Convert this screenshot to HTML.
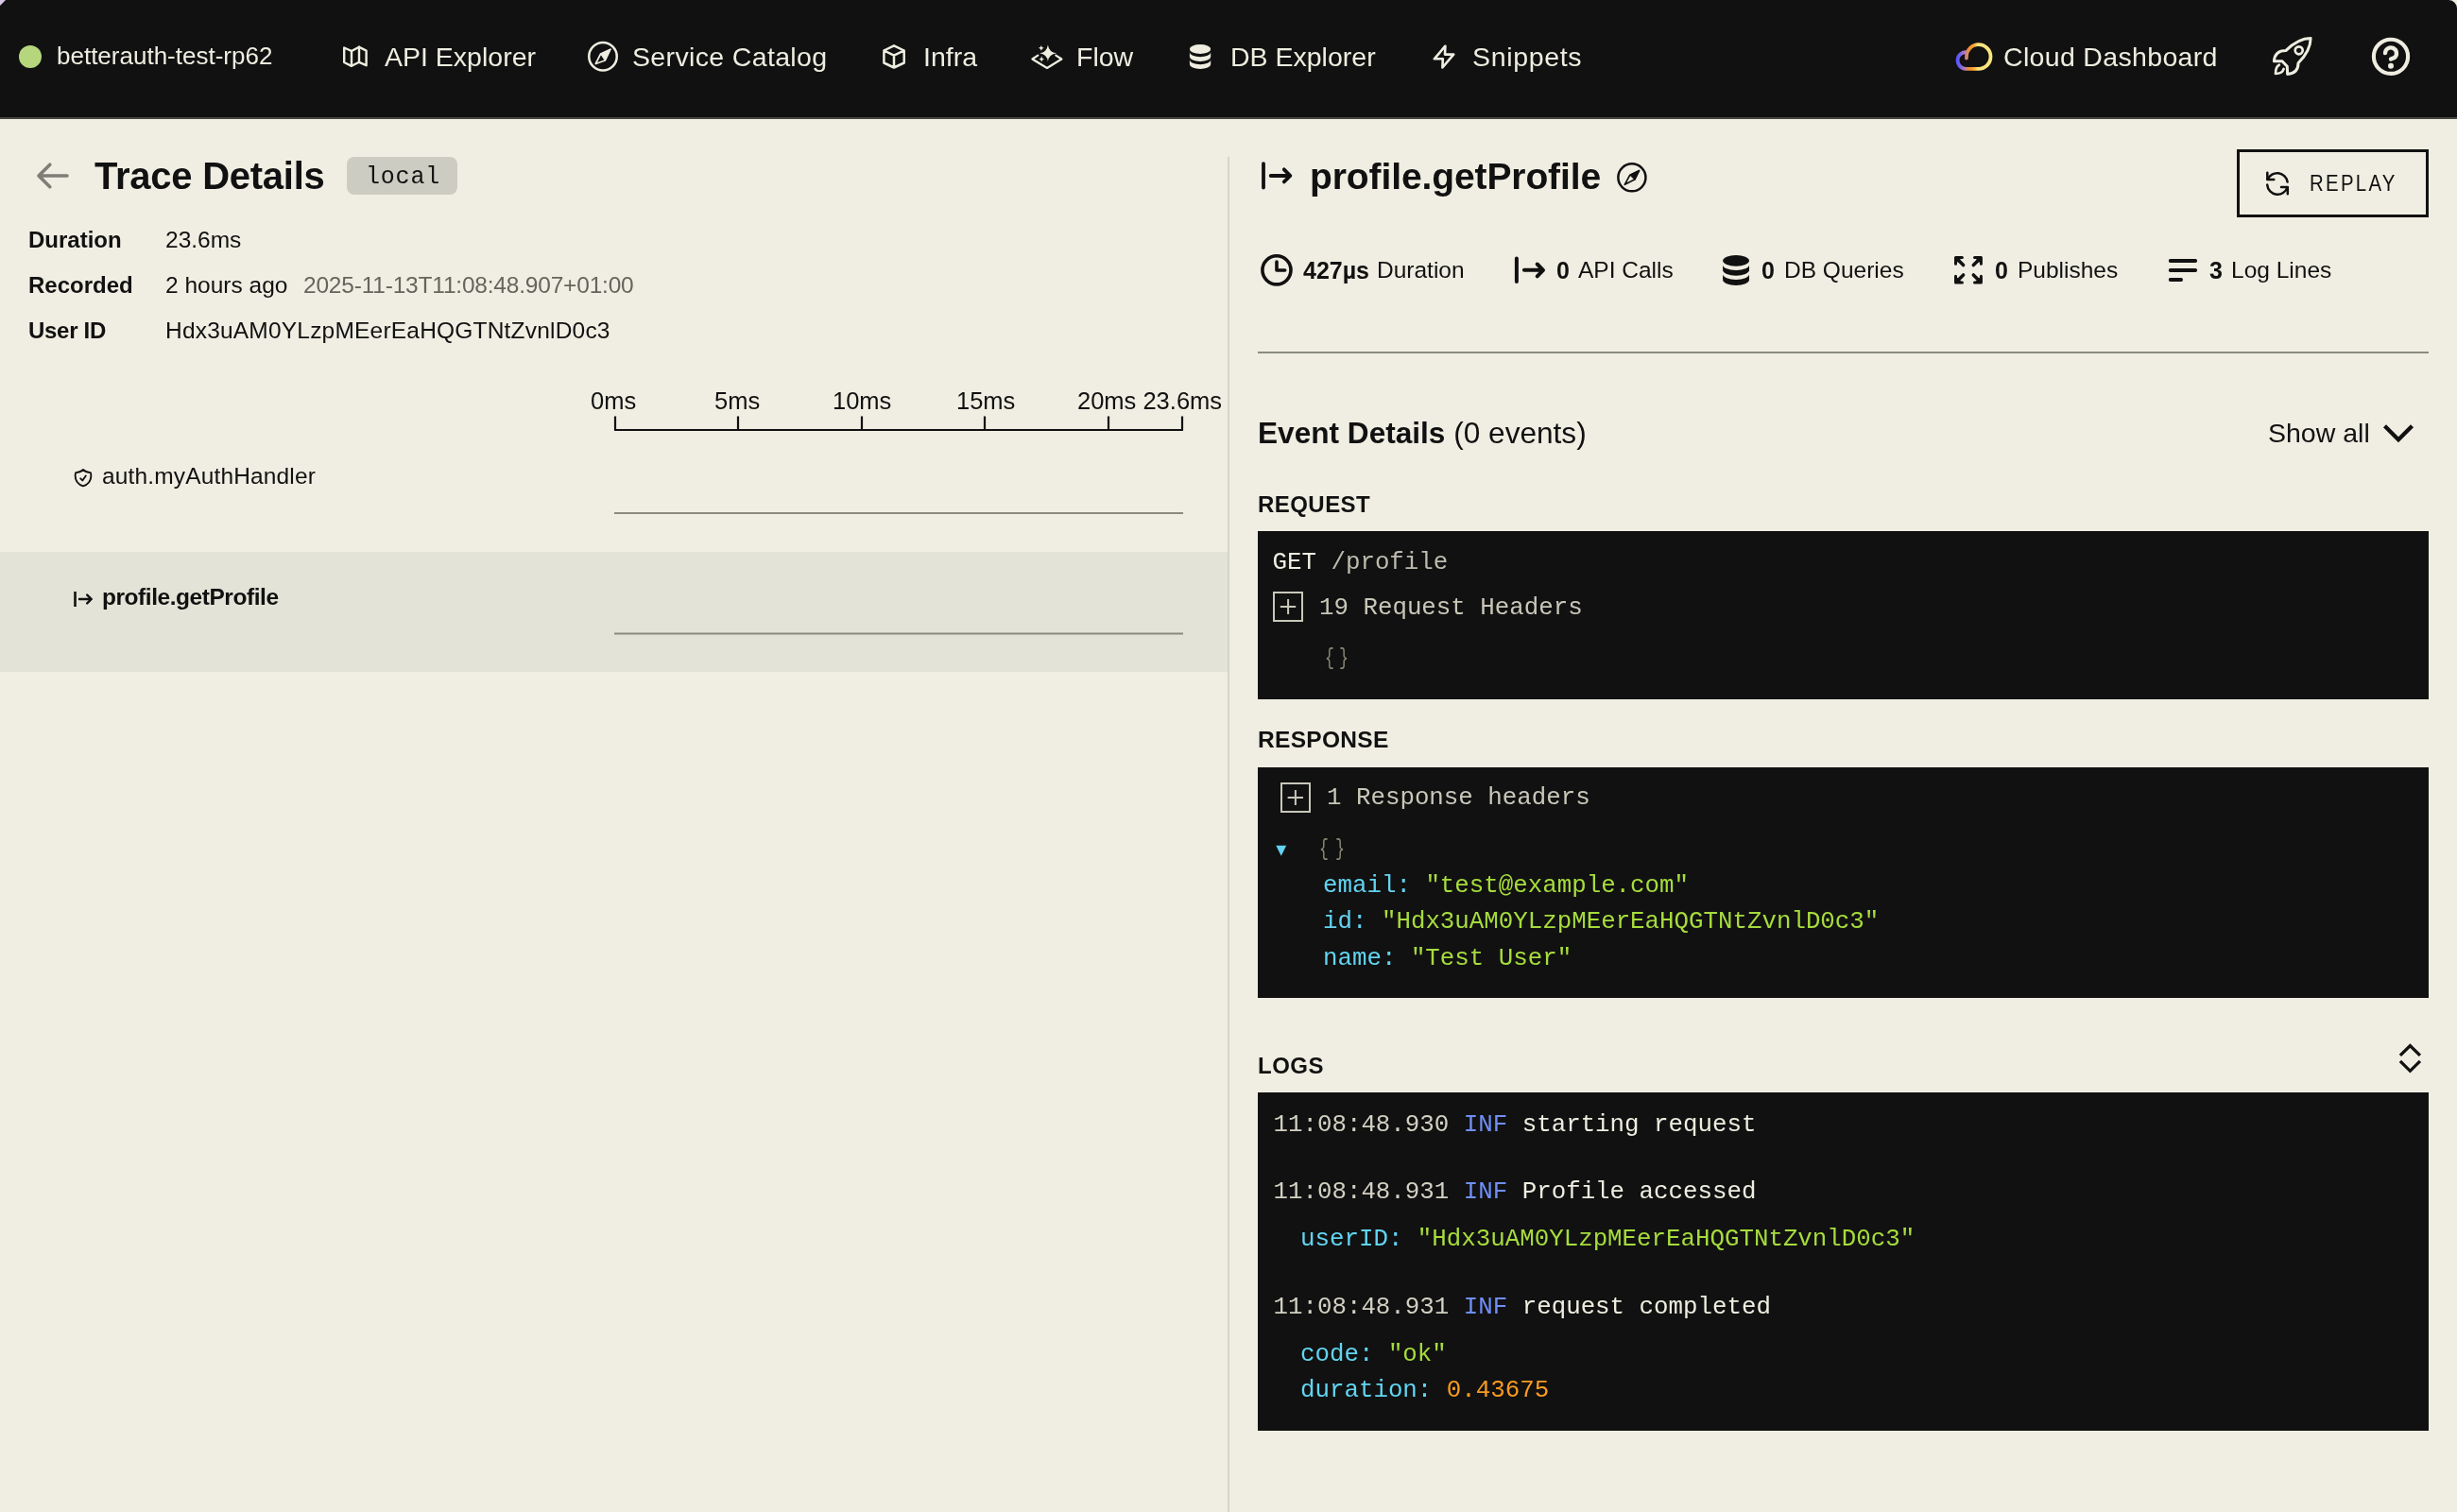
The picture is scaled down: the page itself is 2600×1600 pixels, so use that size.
<!DOCTYPE html>
<html><head><meta charset="utf-8">
<style>
*{box-sizing:border-box;margin:0;padding:0}
html,body{width:2600px;height:1600px;overflow:hidden;background:#F0EEE2}
body{position:relative;font-family:"Liberation Sans",sans-serif;color:#111111}
.a{position:absolute;white-space:pre;line-height:1}
.m{font-family:"Liberation Mono",monospace;font-size:25.8px}
.nt{color:#EEEDE0;font-size:28.5px}
.b{font-weight:700}
.c-ts{color:#D2D0C2}
.c-inf{color:#6F8FF7}
.c-msg{color:#EEEDE0}
.c-key{color:#62D4F1}
.c-str{color:#A6DC3C}
.c-num{color:#F89B22}
.c-br{color:#8C8876}
.c-hd{color:#C9C7B9}
</style></head><body>
<div style="position:absolute;left:0;top:0;width:2600px;height:1600px;will-change:transform;background:#F0EEE2;overflow:hidden">
<!-- nav bar -->
<div class="a" style="left:0;top:0;width:2600px;height:124px;background:#111111"></div>
<div class="a" style="left:0;top:124px;width:2600px;height:2px;background:#46463f"></div>

<div class="a" style="left:20px;top:48px;width:24px;height:24px;border-radius:50%;background:#B5D67C"></div>
<div class="a nt" style="left:60px;top:46px;font-size:26px">betterauth-test-rp62</div>
<div class="a nt" style="left:407px;top:46px">API Explorer</div>
<div class="a nt" style="left:669px;top:46px;letter-spacing:0.35px">Service Catalog</div>
<div class="a nt" style="left:977px;top:46px">Infra</div>
<div class="a nt" style="left:1139px;top:46px">Flow</div>
<div class="a nt" style="left:1302px;top:46px">DB Explorer</div>
<div class="a nt" style="left:1558px;top:46px;letter-spacing:0.65px">Snippets</div>
<div class="a nt" style="left:2120px;top:46px;letter-spacing:0.33px">Cloud Dashboard</div>

<!-- panels -->
<div class="a" style="left:1299px;top:166px;width:2px;height:1434px;background:#D5D5C9"></div>
<div class="a" style="left:0;top:584px;width:1299px;height:127px;background:#E3E3D7"></div>

<!-- left header -->
<div class="a b" style="left:100px;top:166px;font-size:40px;letter-spacing:-0.25px">Trace Details</div>
<div class="a" style="left:367px;top:166px;width:117px;height:40px;border-radius:8px;background:#CDCCC2"></div>
<div class="a m" style="left:387px;top:175px;font-size:25px;letter-spacing:0.8px">local</div>

<div class="a b" style="left:30px;top:242px;font-size:24px">Duration</div>
<div class="a" style="left:175px;top:242px;font-size:24.5px">23.6ms</div>
<div class="a b" style="left:30px;top:290px;font-size:24px">Recorded</div>
<div class="a" style="left:175px;top:290px;font-size:24.5px">2 hours ago</div>
<div class="a" style="left:321px;top:290px;font-size:24.5px;letter-spacing:-0.2px;color:#66655d">2025-11-13T11:08:48.907+01:00</div>
<div class="a b" style="left:30px;top:338px;font-size:24px;letter-spacing:-0.3px">User ID</div>
<div class="a" style="left:175px;top:338px;font-size:24.5px;letter-spacing:0.2px">Hdx3uAM0YLzpMEerEaHQGTNtZvnlD0c3</div>

<!-- timeline labels -->
<div class="a" style="left:625px;top:412px;font-size:25.5px">0ms</div>
<div class="a" style="left:756px;top:412px;font-size:25.5px">5ms</div>
<div class="a" style="left:881px;top:412px;font-size:25.5px">10ms</div>
<div class="a" style="left:1012px;top:412px;font-size:25.5px">15ms</div>
<div class="a" style="left:1140px;top:412px;font-size:25.5px">20ms 23.6ms</div>

<div class="a" style="left:108px;top:492px;font-size:24.5px;letter-spacing:0.15px">auth.myAuthHandler</div>
<div class="a b" style="left:108px;top:620px;font-size:24.5px;letter-spacing:-0.45px">profile.getProfile</div>

<!-- right header -->
<div class="a b" style="left:1386px;top:167px;font-size:39px;letter-spacing:-0.1px">profile.getProfile</div>
<div class="a" style="left:2367px;top:158px;width:203px;height:72px;border:3px solid #111"></div>
<div class="a" style="left:2444px;top:182px;font-size:24px;letter-spacing:2.7px;transform:scaleX(0.85);transform-origin:0 0">REPLAY</div>

<div class="a b" style="left:1379px;top:273.5px;font-size:25px">427µs</div>
<div class="a" style="left:1457px;top:273.5px;font-size:24.5px">Duration</div>
<div class="a b" style="left:1647px;top:273.5px;font-size:25px">0</div>
<div class="a" style="left:1670px;top:273.5px;font-size:24.5px">API Calls</div>
<div class="a b" style="left:1864px;top:273.5px;font-size:25px">0</div>
<div class="a" style="left:1888px;top:273.5px;font-size:24.5px">DB Queries</div>
<div class="a b" style="left:2111px;top:273.5px;font-size:25px">0</div>
<div class="a" style="left:2135px;top:273.5px;font-size:24.5px">Publishes</div>
<div class="a b" style="left:2338px;top:273.5px;font-size:25px">3</div>
<div class="a" style="left:2361px;top:273.5px;font-size:24.5px">Log Lines</div>

<div class="a" style="left:1331px;top:372px;width:1239px;height:2px;background:#8a8a80"></div>

<div class="a" style="left:1331px;top:442.5px;font-size:31.6px"><b>Event Details</b> (0 events)</div>
<div class="a" style="left:2400px;top:443.8px;font-size:28.5px">Show all</div>

<div class="a b" style="left:1331px;top:521.5px;font-size:24px;letter-spacing:0.45px">REQUEST</div>
<div class="a" style="left:1331px;top:562px;width:1239px;height:178px;background:#111"></div>
<div class="a m" style="left:1346.5px;top:583px"><span class="c-msg">GET</span> <span style="color:#BDBBAE">/profile</span></div>
<div class="a" style="left:1347px;top:626px;width:32px;height:32px;border:2px solid #C9C7B9"></div>
<div class="a m c-hd" style="left:1396px;top:630.7px">19 Request Headers</div>
<div class="a m c-br" style="left:1402px;top:685.6px;font-size:23px;transform:scaleX(0.72);transform-origin:0 0">{</div><div class="a m c-br" style="left:1417px;top:685.6px;font-size:23px;transform:scaleX(0.72);transform-origin:0 0">}</div>

<div class="a b" style="left:1331px;top:770.7px;font-size:24.5px;letter-spacing:0.3px">RESPONSE</div>
<div class="a" style="left:1331px;top:812px;width:1239px;height:244px;background:#111"></div>
<div class="a" style="left:1355px;top:828px;width:32px;height:32px;border:2px solid #C9C7B9"></div>
<div class="a m c-hd" style="left:1404px;top:832px">1 Response headers</div>
<div class="a m c-br" style="left:1396px;top:887.8px;font-size:23px;transform:scaleX(0.72);transform-origin:0 0">{</div><div class="a m c-br" style="left:1413px;top:887.8px;font-size:23px;transform:scaleX(0.72);transform-origin:0 0">}</div>
<div class="a m" style="left:1400px;top:925px"><span class="c-key">email:</span> <span class="c-str">"test@example.com"</span></div>
<div class="a m" style="left:1400px;top:962.5px"><span class="c-key">id:</span> <span class="c-str">"Hdx3uAM0YLzpMEerEaHQGTNtZvnlD0c3"</span></div>
<div class="a m" style="left:1400px;top:1001.5px"><span class="c-key">name:</span> <span class="c-str">"Test User"</span></div>

<div class="a b" style="left:1331px;top:1115.7px;font-size:24px;letter-spacing:0.5px">LOGS</div>
<div class="a" style="left:1331px;top:1156px;width:1239px;height:358px;background:#111"></div>
<div class="a m" style="left:1347.5px;top:1177.5px"><span class="c-ts">11:08:48.930</span> <span class="c-inf">INF</span> <span class="c-msg">starting request</span></div>
<div class="a m" style="left:1347.5px;top:1249px"><span class="c-ts">11:08:48.931</span> <span class="c-inf">INF</span> <span class="c-msg">Profile accessed</span></div>
<div class="a m" style="left:1376px;top:1299px"><span class="c-key">userID:</span> <span class="c-str">"Hdx3uAM0YLzpMEerEaHQGTNtZvnlD0c3"</span></div>
<div class="a m" style="left:1347.5px;top:1371px"><span class="c-ts">11:08:48.931</span> <span class="c-inf">INF</span> <span class="c-msg">request completed</span></div>
<div class="a m" style="left:1376px;top:1421px"><span class="c-key">code:</span> <span class="c-str">"ok"</span></div>
<div class="a m" style="left:1376px;top:1458.7px"><span class="c-key">duration:</span> <span class="c-num">0.43675</span></div>

<!-- icons overlay -->
<svg class="a" style="left:0;top:0" width="2600" height="1600" viewBox="0 0 2600 1600" fill="none" stroke-linecap="round" stroke-linejoin="round">
<defs>
<linearGradient id="cg" x1="2069.5" y1="0" x2="2108.3" y2="0" gradientUnits="userSpaceOnUse">
<stop offset="0" stop-color="#4F52FF"/>
<stop offset="0.1" stop-color="#6A5CF2"/>
<stop offset="0.24" stop-color="#B27CB8"/>
<stop offset="0.33" stop-color="#E28A55"/>
<stop offset="0.42" stop-color="#F8961E"/>
<stop offset="0.52" stop-color="#FCB448"/>
<stop offset="0.6" stop-color="#FDE27A"/>
<stop offset="1" stop-color="#FBE680"/>
</linearGradient>
</defs>
<!-- corners -->
<path d="M0 0 H6 L0 6 Z" fill="#D8C8E8"/>
<path d="M2591.5 0 H2600 V9 A8.5 9 0 0 0 2591.5 0 Z" fill="#EEEDE0"/>

<g stroke="#EEEDE0">
<!-- map -->
<path d="M364.2 50.5 L372 54 L380 49.8 L387.6 53.6 V69.2 L380 65.8 L372 69.8 L364.2 66 Z" stroke-width="2.4"/>
<path d="M372 54 V69.8 M380 49.8 V65.8" stroke-width="2.4"/>
<!-- compass nav -->
<circle cx="638" cy="59.8" r="14.75" stroke-width="2.5"/>
<path d="M645.9 52.2 L640.2 64 L630.3 67.5 L635.6 57 Z" stroke-width="1.7"/>
<path d="M645.9 52.2 L635.6 57 L640.2 64 Z" fill="#EEEDE0" stroke-width="1"/>
<!-- cube -->
<path d="M946 48.3 L956.7 53.5 V66.5 L946 71.5 L935.4 66.5 V53.5 Z M935.4 53.5 L946 58.7 L956.7 53.5 M946 58.7 V71.5" stroke-width="2.5"/>
<!-- flow -->
<path d="M1098.3 58.6 L1092.4 62.5 L1108 72 L1123.4 62.5 L1117.3 58.6" stroke-width="2.2"/>
</g>
<g fill="#EEEDE0">
<path d="M1108.9 47.4 Q1110 55.2 1118.1 56.3 Q1110 57.4 1108.9 64.9 Q1107.8 57.4 1100.1 56.3 Q1107.8 55.2 1108.9 47.4 Z"/>
<path d="M1101.8 47.9 Q1102.1 50.5 1104.7 50.8 Q1102.1 51.1 1101.8 53.7 Q1101.5 51.1 1098.9 50.8 Q1101.5 50.5 1101.8 47.9 Z"/>
<path d="M1102.2 59.4 Q1102.5 62.2 1105.1 62.5 Q1102.5 62.8 1102.2 65.6 Q1101.9 62.8 1099.3 62.5 Q1101.9 62.2 1102.2 59.4 Z"/>
<!-- db nav -->
<ellipse cx="1270.05" cy="52" rx="11.15" ry="4.95"/>
<path d="M1258.9 55.2 A11.15 4.95 0 0 0 1281.2 55.2 V60.05 A11.15 4.95 0 0 1 1258.9 60.05 Z"/>
<path d="M1258.9 63.3 A11.15 4.95 0 0 0 1281.2 63.3 V68.05 A11.15 4.95 0 0 1 1258.9 68.05 Z"/>
</g>
<g stroke="#EEEDE0">
<!-- bolt -->
<path d="M1529.4 48.7 L1517.8 62.3 H1526.8 L1526.4 71.5 L1538.2 57.6 H1529 Z" stroke-width="2.6"/>
<!-- rocket -->
<path d="M2445.1 40.5 C2437 40.5 2428 44.5 2418.8 53.6 C2412 53.6 2407 57 2406.4 64.8 L2415 64.8 L2420.3 70.3 L2420.6 78.4 C2428 78 2432 74 2432 66.8 C2441 57.8 2445.1 49 2445.1 40.5 Z" stroke-width="3"/>
<path d="M2411.8 68.7 C2409 70 2408 74 2408 78 C2412 78 2415.6 76.6 2416.6 73" stroke-width="2.7"/>
<circle cx="2432.7" cy="53.3" r="4" stroke-width="2.7"/>
<!-- help -->
<circle cx="2530" cy="59.8" r="18.1" stroke-width="4.1"/>
<path d="M2524 56.2 A6 6 0 1 1 2533.8 61 L2530 62.6" stroke-width="4.3"/>
</g>
<circle cx="2530" cy="69.7" r="3" fill="#EEEDE0"/>
<!-- cloud -->
<path d="M2080.9 61.6 V60.2 A12.8 12.8 0 1 1 2093.6 72.8 H2080.2 A8.85 8.85 0 1 1 2081.7 55.2" stroke="url(#cg)" stroke-width="3.8"/>

<!-- back arrow -->
<path d="M52.8 174.2 L41 186 L52.8 197.7 M41 186 H71" stroke="#7E7E76" stroke-width="3.6"/>
<!-- shield -->
<g transform="translate(76.84 494.5) scale(0.93)" stroke="#111" stroke-width="2">
<path d="M9 12.75 11.25 15 15 9.75m-3-7.036A11.959 11.959 0 0 1 3.598 6 11.99 11.99 0 0 0 3 9.749c0 5.592 3.824 10.29 9 11.623 5.176-1.332 9-6.03 9-11.622 0-1.31-.21-2.571-.598-3.751h-.152c-3.196 0-6.1-1.248-8.25-3.285Z"/>
</g>
<!-- api small -->
<path d="M79.5 626 V642" stroke="#111" stroke-width="2.6" stroke-linecap="butt"/>
<path d="M84 634 H96.5 M92.2 629.6 L96.8 634 L92.2 638.4" stroke="#111" stroke-width="2.4"/>

<!-- timeline axis -->
<path d="M650 455 H1252 M651 440.5 V455 M781 440.5 V455 M912 440.5 V455 M1042 440.5 V455 M1173 440.5 V455 M1251 440.5 V455" stroke="#111" stroke-width="2.2" stroke-linecap="butt"/>
<path d="M650 543 H1252 M650 670.5 H1252" stroke="#8a8a80" stroke-width="2" stroke-linecap="butt"/>

<!-- right header icons -->
<path d="M1337 173.1 V198.6 M1344.7 186 H1365 M1358.8 179.3 L1365.4 186 L1358.8 192.4" stroke="#111" stroke-width="3.8"/>
<circle cx="1726.9" cy="187.8" r="14.55" stroke="#111" stroke-width="2.5"/>
<path d="M1734.5 180.5 L1729.7 190.1 L1719.3 195.3 L1724.8 185.2 Z" stroke="#111" stroke-width="1.7"/>
<path d="M1734.5 180.5 L1724.8 185.2 L1729.7 190.1 Z" fill="#111" stroke="#111" stroke-width="1"/>
<!-- replay icon -->
<path d="M2399.6 189.8 A11 11 0 0 1 2420.6 192.6 M2399.2 195.6 A11 11 0 0 0 2420.6 198.2" stroke="#111" stroke-width="2.5"/>
<path d="M2399.3 182.8 V190 H2406.3 M2414 197.9 H2420.8 V205.2" stroke="#111" stroke-width="2.5"/>
<!-- stats icons -->
<circle cx="1350.95" cy="285.85" r="15.05" stroke="#111" stroke-width="3.6"/>
<path d="M1351 277 V286 H1359.7" stroke="#111" stroke-width="3.6"/>
<path d="M1604.9 273.6 V298 M1612.9 285.8 H1632.5 M1626.7 279.5 L1633 285.8 L1626.7 292.4" stroke="#111" stroke-width="4"/>
<g fill="#111">
<ellipse cx="1837.05" cy="275.85" rx="13.95" ry="5.95"/>
<path d="M1823.1 280.15 A13.95 5.95 0 0 0 1851 280.15 V285.75 A13.95 5.95 0 0 1 1823.1 285.75 Z"/>
<path d="M1823.1 290.05 A13.95 5.95 0 0 0 1851 290.05 V296.05 A13.95 5.95 0 0 1 1823.1 296.05 Z"/>
</g>
<g stroke="#111" stroke-width="3" fill="#111">
<g id="pubTL"><path d="M2076.4 272.45 H2069.5 V279.3"/><path d="M2071 274 L2077.6 280.6" stroke-width="3.5"/><path d="M2069.5 272.45 H2074.6 L2069.5 277.5 Z" stroke-width="1"/></g>
<use href="#pubTL" transform="translate(4165.9 0) scale(-1 1)"/>
<use href="#pubTL" transform="translate(0 571.55) scale(1 -1)"/>
<use href="#pubTL" transform="translate(4165.9 571.55) scale(-1 -1)"/>
</g>
<path d="M2296.7 276 H2323.2 M2296.7 286 H2323.2 M2296.7 296 H2308.1" stroke="#111" stroke-width="3.8"/>

<!-- show all chevron -->
<path d="M2523.5 450.8 L2538 465.3 L2552.5 450.8" stroke="#111" stroke-width="4.3" stroke-linecap="butt" stroke-linejoin="miter"/>
<!-- logs chevrons -->
<path d="M2539.9 1116.9 L2550.4 1106.5 L2560.9 1116.9 M2539.9 1122.9 L2550.4 1133.3 L2560.9 1122.9" stroke="#111" stroke-width="3.3" stroke-linecap="butt" stroke-linejoin="miter"/>

<!-- plus signs -->
<path d="M1354.8 641.9 H1371.2 M1363.1 634 V649.9" stroke="#C9C7B9" stroke-width="2" stroke-linecap="butt"/>
<path d="M1362.6 843.9 H1379 M1370.9 836 V851.9" stroke="#C9C7B9" stroke-width="2" stroke-linecap="butt"/>
<!-- triangle -->
<path d="M1350.3 894.7 H1361.2 L1355.75 905.7 Z" fill="#62D4F1"/>
</svg>
</div>
</body></html>
